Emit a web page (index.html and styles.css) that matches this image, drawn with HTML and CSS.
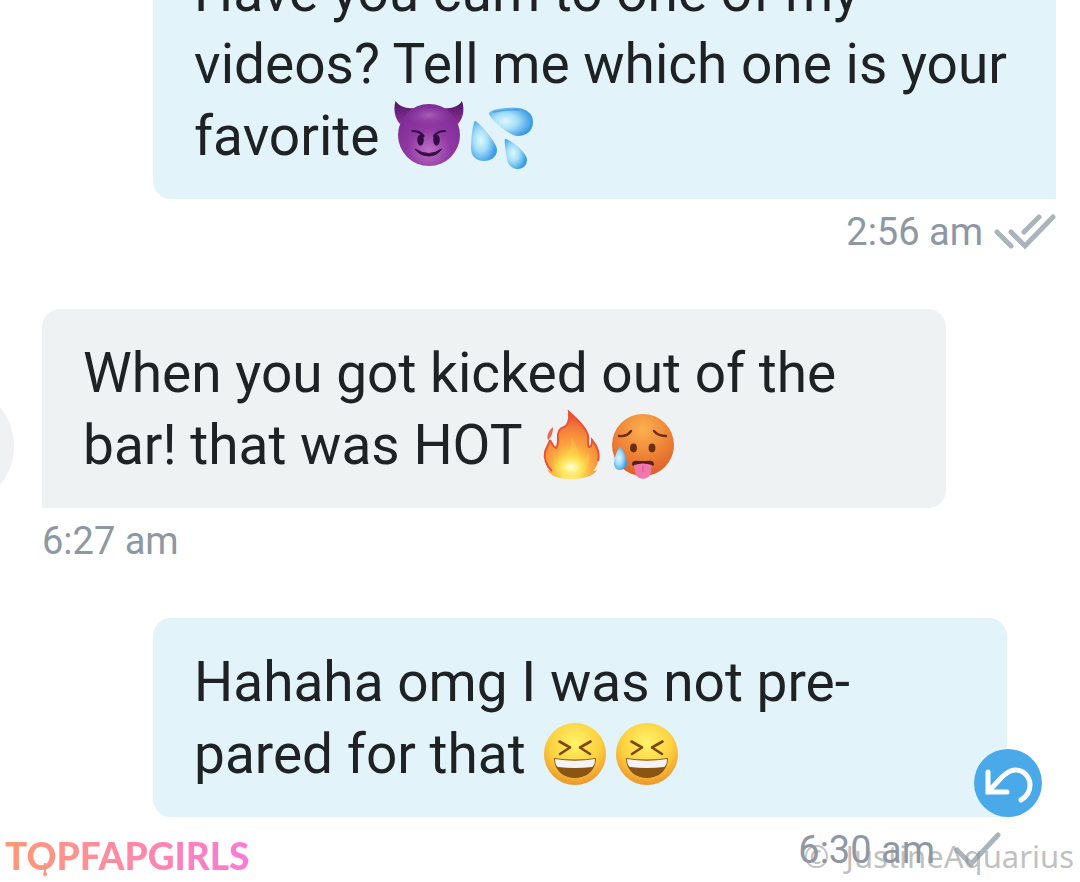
FILE: index.html
```html
<!DOCTYPE html>
<html lang="en">
<head>
  <meta charset="UTF-8">
  <meta name="viewport" content="width=device-width, initial-scale=1.0">
  <title>Messages</title>
  <link rel="stylesheet" href="styles.css">
</head>
<body>
  <!-- shared gradients and shapes -->
  <svg class="defs" width="0" height="0" aria-hidden="true">
    <defs>
      <radialGradient id="purple" cx="50%" cy="75%" r="70%">
        <stop offset="0" stop-color="#bd6fc6"/>
        <stop offset="0.5" stop-color="#8f38a2"/>
        <stop offset="1" stop-color="#7d2b95"/>
      </radialGradient>
      <linearGradient id="horn" x1="0" y1="0" x2="0" y2="1">
        <stop offset="0" stop-color="#4c1763"/>
        <stop offset="1" stop-color="#8d2e98"/>
      </linearGradient>
      <radialGradient id="shine">
        <stop offset="0" stop-color="#c07fcc" stop-opacity="0.6"/>
        <stop offset="1" stop-color="#9a45ab" stop-opacity="0"/>
      </radialGradient>
      <radialGradient id="water" cx="38%" cy="48%" r="60%">
        <stop offset="0" stop-color="#dcf8fd"/>
        <stop offset="0.45" stop-color="#a5dff8"/>
        <stop offset="1" stop-color="#3b9be4"/>
      </radialGradient>
      <radialGradient id="flame" cx="49%" cy="88%" r="82%">
        <stop offset="0" stop-color="#fffbb8"/>
        <stop offset="0.22" stop-color="#ffe04e"/>
        <stop offset="0.5" stop-color="#fba33e"/>
        <stop offset="0.8" stop-color="#f47b3c"/>
        <stop offset="1" stop-color="#ea4f32"/>
      </radialGradient>
      <radialGradient id="core">
        <stop offset="0" stop-color="#fffde0"/>
        <stop offset="0.4" stop-color="#fff38a" stop-opacity="0.8"/>
        <stop offset="1" stop-color="#ffe04e" stop-opacity="0"/>
      </radialGradient>
      <radialGradient id="heat" cx="50%" cy="25%" r="75%">
        <stop offset="0" stop-color="#fbb050"/>
        <stop offset="0.5" stop-color="#f0893a"/>
        <stop offset="1" stop-color="#dc5f28"/>
      </radialGradient>
      <radialGradient id="yellow" cx="50%" cy="32%" r="68%">
        <stop offset="0" stop-color="#fff36a"/>
        <stop offset="0.6" stop-color="#fdd03e"/>
        <stop offset="1" stop-color="#eb962c"/>
      </radialGradient>
      <symbol id="laugh" viewBox="0 0 72 72">
        <circle cx="36" cy="36" r="31" fill="url(#yellow)"/>
        <path d="M20.500 23.500 L31 29.500 L21 36 M51.500 23.500 L41 29.500 L51 36" fill="none" stroke="#7d4710" stroke-width="2.600" stroke-linecap="round" stroke-linejoin="round"/>
        <path d="M15 40 Q36 43 57 40 C57 52 48 60 36 60 C24 60 15 52 15 40 Z" fill="#8a5412"/>
        <path d="M16 41 Q36 44.500 56 41 C56 45 55 48 53 49 Q36 51 19 49 C17 48 16 45 16 41 Z" fill="#f4f3f5"/>
      </symbol>
    </defs>
  </svg>

  <main class="chat">
    <article class="message sent">
      <div class="bubble">
        <p>Have you cum to one of my<br>videos? Tell me which one is your<br>favorite
          <span class="emojis"><svg class="emoji" viewBox="0 0 72 72" role="img" aria-label="smiling devil">
            <path d="M2.500 1 C0 10 2 18 7 24 L21 8 C13 9 6 6 2.500 1 Z" fill="url(#horn)"/>
            <path d="M69 1 C72 10 70 18 65 24 L51 8 C59 9 66 6 69 1 Z" fill="url(#horn)"/>
            <circle cx="36" cy="35" r="31" fill="url(#purple)"/>
            <ellipse cx="36" cy="15" rx="24" ry="11" fill="url(#shine)"/>
            <ellipse cx="27.500" cy="40" rx="3.300" ry="5.600" fill="#340d46"/>
            <ellipse cx="43.500" cy="40" rx="3.300" ry="5.600" fill="#340d46"/>
            <path d="M19.500 31 Q27 31 30.500 36 M52 31 Q45 31 41 36" fill="none" stroke="#340d46" stroke-width="2.200" stroke-linecap="round"/>
            <path d="M22 49 Q36 58 48.500 49 Q44 56 36 56 Q27 56 22 49 Z" fill="#340d46" stroke="#340d46" stroke-width="1" stroke-linejoin="round"/>
          </svg><svg class="emoji" viewBox="0 0 72 72" role="img" aria-label="sweat droplets">
            <path d="M10 21 C12 20 32 42 32 50 C32 57 26 61 19 61 C11 61 6 56 6 48 C6 39 8 22 10 21 Z" fill="url(#water)"/>
            <path d="M24 13 C26 9 43 7 53 8 C62 9 68 14 68 22 C68 31 61 36 53 36 C43 36 23 17 24 13 Z" fill="url(#water)"/>
            <path d="M40 39 C43 38 62 52 62 60 C62 65 58 69 53 69 C47 69 43 65 42 59 C41 53 39 41 40 39 Z" fill="url(#water)"/>
            <path d="M29 12 Q44 9 54 10" fill="none" stroke="#2f8fd8" stroke-width="1.500" stroke-linecap="round" opacity="0.600"/>
          </svg></span></p>
      </div>
      <footer class="meta">
        <time>2:56 am</time>
        <svg class="seen" viewBox="0 0 62 36" role="img" aria-label="seen">
          <path d="M3 18 L17 32 M17 18 L31 32 L59 3 M30 18 L45 3"/>
        </svg>
      </footer>
    </article>

    <article class="message received">
      <span class="avatar"></span>
      <div class="bubble">
        <p>When you got kicked out of the<br>bar! that was HOT
          <span class="emojis"><svg class="emoji" viewBox="0 0 72 72" role="img" aria-label="fire">
            <path d="M34 3 C42 10 52 19 53 27 C54 31 52 36 54 38 C56 38 57 35 57 31 C62 37 65 45 63 52 C62 57 60 60 58 62 C61 62 62 61 63 60 C58 68 47 70 36 70 C25 70 16 68 12 60 C14 62 16 62 17 62 C11 57 9 49 10 43 C11 39 14 35 15 31 C17 34 18 38 21 39 C23 37 23 33 23 30 C22 23 25 19 29 18 C32 17 35 12 34 3 Z" fill="url(#flame)"/>
            <path d="M15 31 C17 34 18 38 21 39 C23 37 23 33 23 30 C22 23 25 19 29 18 C32 17 35 12 34 3 C42 10 52 19 53 27 C54 31 52 36 54 38 C56 38 57 35 57 31 C62 37 65 45 63 52 M15 31 C14 35 11 39 10 43 C9 49 11 57 17 62" fill="none" stroke="#ea5236" stroke-width="2"/>
            <path d="M18 18 C18 23 17 27 13 31 C11 27 14 21 18 18 Z" fill="#ef6650"/>
            <path d="M36 28 C43 37 42 45 47 51 C52 49 52 45 53 43 C57 54 51 67 36 68 C21 67 16 56 21 49 C23 52 25 53 27 51 C31 44 38 40 36 28 Z" fill="#ffd94c" opacity="0.300"/>
            <ellipse cx="36" cy="58" rx="17" ry="12" fill="url(#core)"/>
          </svg><svg class="emoji" viewBox="0 0 72 72" role="img" aria-label="hot face">
            <circle cx="36" cy="36" r="31" fill="url(#heat)"/>
            <path d="M12 27 Q20 28 24 22 M47 22 Q51 27 59 27" fill="none" stroke="#6b2c10" stroke-width="2.400" stroke-linecap="round"/>
            <ellipse cx="26.500" cy="39" rx="3.400" ry="4.400" fill="#6b2c10"/>
            <ellipse cx="45" cy="39" rx="3.400" ry="4.400" fill="#6b2c10"/>
            <path d="M25 56 C25 50 30 52 36 52 C42 52 47 50 47 56 C45 58 27 58 25 56 Z" fill="#571f16"/>
            <path d="M27 56 Q36 53 45 56 L44 63 C43 72 29 72 28 63 Z" fill="#f176ac"/>
            <path d="M36 57 V63" stroke="#dc5f98" stroke-width="1.500"/>
            <path d="M13 38 C15 38 20 49 20 54 C20 58 17 61 13 61 C9 61 7 58 7 54 C7 49 11 38 13 38 Z" fill="url(#water)"/>
          </svg></span></p>
      </div>
      <footer class="meta">
        <time>6:27 am</time>
      </footer>
    </article>

    <article class="message sent latest">
      <div class="bubble">
        <p>Hahaha omg I was not pre-<br>pared for that
          <span class="emojis"><svg class="emoji" role="img" aria-label="laughing"><use href="#laugh"/></svg><svg class="emoji" role="img" aria-label="laughing"><use href="#laugh"/></svg></span></p>
        <button class="undo" type="button" aria-label="Undo">
          <svg viewBox="0 0 68 68">
            <path d="M14 23 V43 H33 M14 43 L27 29 C32 24 36 21 41 21 C50 21 56 28 56 36 C56 43 52 48 47 51"/>
          </svg>
        </button>
      </div>
      <footer class="meta">
        <time>6:30 am</time>
        <svg class="delivered" viewBox="0 0 48 36" role="img" aria-label="delivered">
          <path d="M4 18 L18 32 L45 3"/>
        </svg>
      </footer>
    </article>
  </main>

  <div class="brand">TOPFAPGIRLS
    <svg class="drip" viewBox="0 0 8 14" aria-hidden="true">
      <path d="M4 0 V10" stroke="#ff9880" stroke-width="2"/>
      <circle cx="4" cy="11" r="2" fill="#ff9880"/>
    </svg>
  </div>
  <div class="watermark">©&nbsp; JustineAquarius</div>
</body>
</html>
```
FILE: styles.css
```css
* {
  box-sizing: border-box;
}
body {
  margin: 0;
  min-height: 100vh;
  position: relative;
  overflow: hidden;
  background: #fff;
  font-family: Roboto, "Liberation Sans", sans-serif;
}
.defs {
  position: absolute;
}

/* the thread is scrolled, its first line is cut by the window */
.chat {
  height: 100vh;
  margin-top: -72px;
  display: flex;
  flex-direction: column;
  gap: 46px;
}
.message {
  position: relative;
  flex: none;
}
.sent {
  margin: 0 24px 0 153px;
}
.received {
  padding: 0 134px 0 42px;
}
.latest {
  margin-right: 73px;
}

.bubble {
  position: relative;
  padding: 28px 41px 27px;
  border-radius: 18px;
}
.bubble p {
  margin: 0;
  font-size: 55px;
  line-height: 72px;
  color: #1f2225;
  white-space: nowrap;
}
.sent .bubble {
  background: #e2f3fa;
  border-bottom-right-radius: 0;
}
.received .bubble {
  background: #eef2f3;
  border-bottom-left-radius: 0;
}
.emojis {
  display: inline-flex;
  vertical-align: top;
}
.emoji {
  width: 72px;
  height: 72px;
}

.meta {
  display: flex;
  align-items: center;
  gap: 11px;
  font-size: 38px;
  line-height: 66px;
  color: #8d97a5;
}
.sent .meta {
  justify-content: flex-end;
}
.latest .meta {
  gap: 18px;
  padding-right: 6px;
}
.message + .message {
  margin-top: -2px;
}
.meta svg {
  height: 36px;
  fill: none;
  stroke: #aab4bb;
  stroke-width: 5;
  stroke-linecap: round;
}
.seen {
  width: 62px;
}
.delivered {
  width: 48px;
}

.avatar {
  position: absolute;
  left: -110px;
  top: 75px;
  width: 124px;
  height: 124px;
  border-radius: 50%;
  background: #eef2f3;
}

.undo {
  position: absolute;
  right: -35px;
  bottom: 0;
  width: 68px;
  height: 68px;
  padding: 0;
  border: 0;
  border-radius: 50%;
  background: #4aa9e9;
  cursor: pointer;
}
.undo svg {
  display: block;
  fill: none;
  stroke: #fff;
  stroke-width: 5;
  stroke-linecap: round;
}

.brand {
  position: absolute;
  left: 5px;
  bottom: 6px;
  font-family: Lato, sans-serif;
  font-weight: 900;
  font-size: 37px;
  line-height: 40px;
  color: transparent;
  background: linear-gradient(90deg, #ff9a76, #ff8aa5 50%, #ff78d8);
  -webkit-background-clip: text;
  background-clip: text;
}
.drip {
  position: absolute;
  left: 36px;
  bottom: -1px;
  width: 8px;
  height: 14px;
}
.watermark {
  position: absolute;
  right: 6px;
  bottom: 6px;
  font-family: "Noto Sans", sans-serif;
  font-size: 31px;
  line-height: 40px;
  color: rgba(150, 150, 150, 0.6);
}
```
